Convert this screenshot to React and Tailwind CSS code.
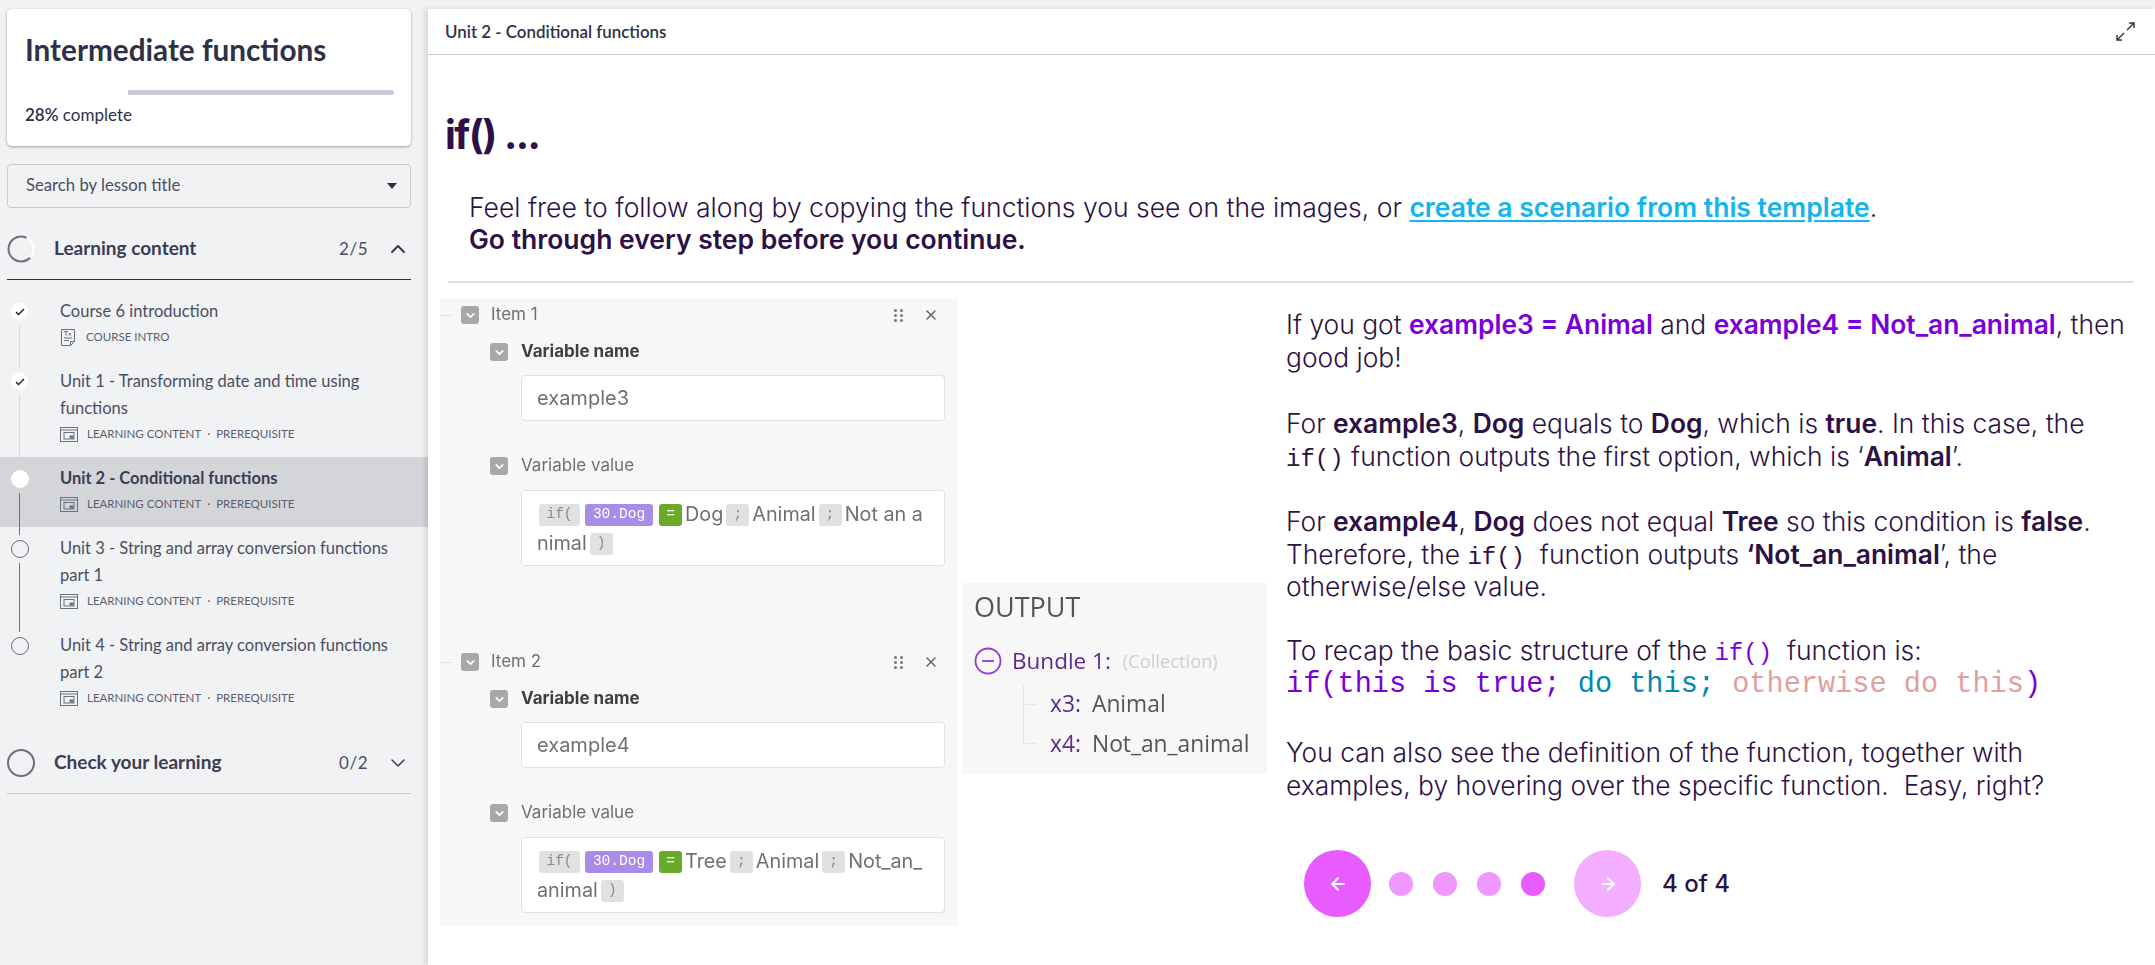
import React from 'react';
import { ArrowLeft, ArrowRight, ChevronDown, ChevronUp, X } from 'lucide-react';

const SANS = "font-['Lato','Noto_Sans',sans-serif]";

const lessons = [
    { title: ['Course 6 introduction'], meta: 'COURSE INTRO', icon: 'doc', state: 'done', line: 'light' },
    { title: ['Unit 1 - Transforming date and time using', 'functions'], meta: 'LEARNING CONTENT', extra: true, state: 'done', line: 'light' },
    { title: ['Unit 2 - Conditional functions'], meta: 'LEARNING CONTENT', extra: true, state: 'active', line: 'dark' },
    { title: ['Unit 3 - String and array conversion functions', 'part 1'], meta: 'LEARNING CONTENT', extra: true, state: 'todo', line: 'dark' },
    { title: ['Unit 4 - String and array conversion functions', 'part 2'], meta: 'LEARNING CONTENT', extra: true, state: 'todo' },
];

function DocIcon() {
    return (
        <svg width="16" height="19" viewBox="0 0 16 19" fill="none" stroke="#6b7080" strokeWidth="1">
            <path d="M1.500 1.500h13v12l-4 4h-9z" />
            <path d="M10.500 17.500v-4h4" />
            <path d="M4 3.500h4M6 3.500v4M8.500 5l2.500 2.500M11 5l-2.500 2.500M4 10h8M4 12.500h5" />
        </svg>
    );
}

function ContentIcon() {
    return (
        <svg width="18" height="15" viewBox="0 0 18 15" fill="none" stroke="#6b7080" strokeWidth="1">
            <rect x="0.500" y="0.500" width="17" height="14" />
            <path d="M0.500 3h17" />
            <rect x="4" y="5.500" width="10" height="6.500" />
            <rect x="10" y="9" width="3" height="2" fill="#6b7080" />
        </svg>
    );
}

function TimelineDot({ state }) {
    if (state === 'done') {
        return (
            <div className="w-[17px] h-[17px] rounded-full bg-white flex items-center justify-center shrink-0">
                <svg width="10" height="8" viewBox="0 0 10 8" fill="none" stroke="#20223a" strokeWidth="1.500">
                    <path d="M1 4l2.500 2.500L9 1" />
                </svg>
            </div>
        );
    }
    if (state === 'active') return <div className="w-[18px] h-[18px] rounded-full bg-white shrink-0" />;
    return <div className="w-[18px] h-[18px] rounded-full border border-[#6b6e7c] shrink-0" />;
}

function LessonRow({ lesson }) {
    const active = lesson.state === 'active';
    return (
        <div className={`flex ${active ? 'bg-[#d4d5d9]' : ''}`}>
            <div className="w-[39px] flex flex-col items-center pt-[13px] shrink-0">
                <TimelineDot state={lesson.state} />
                {lesson.line && (
                    <div className={`relative flex-1 w-px mt-[5px] -mb-[8px] ${lesson.line === 'light' ? 'bg-[#d9dade]' : 'bg-[#6b6e7c]'}`} />
                )}
            </div>
            <div className="ml-[21px] pt-[8px] pb-[11px]">
                {lesson.title.map(t => (
                    <div key={t} className={`text-[16.500px] leading-[27px] ${active ? 'font-bold text-[#3a3d55]' : 'text-[#4b4e62]'}`}>{t}</div>
                ))}
                <div className="flex items-center h-[24px] text-[#5b5e70] text-[11.500px]">
                    {lesson.icon === 'doc' ? <DocIcon /> : <ContentIcon />}
                    <span className={lesson.icon === 'doc' ? 'ml-[10px]' : 'ml-[9px]'}>{lesson.meta}</span>
                    {lesson.extra && <span className="mx-[6px]">·</span>}
                    {lesson.extra && <span>PREREQUISITE</span>}
                </div>
            </div>
        </div>
    );
}

function Sidebar() {
    return (
        <div className={`w-[428px] shrink-0 bg-[#f1f2f4] pt-[9px] pr-[17px] ${SANS} text-[#2e3148]`}>
            <div className="ml-[7px] h-[137px] bg-white rounded-[5px] shadow-[0_1px_3px_rgba(0,0,0,0.35)] px-[18px] pt-[21px]">
                <h1 className="text-[29.700px] leading-[40px] font-bold text-[#2e3148]">Intermediate functions</h1>
                <div className="mt-[20px] h-[5px] bg-[#c8cad8] rounded-[2px] mr-[-1px]">
                    <div className="w-[28%] h-full bg-white" />
                </div>
                <div className="mt-[8px] text-[17px] leading-[24px]"><span className="font-semibold">28%</span> complete</div>
            </div>

            <div className="ml-[7px] mt-[18px] h-[44px] border border-[#c8cad0] rounded-[4px] flex items-center justify-between pl-[18px] pr-[13px] text-[16.700px] text-[#4b4e62]">
                <span>Search by lesson title</span>
                <div className="w-0 h-0 border-x-[5px] border-x-transparent border-t-[6px] border-t-[#2e3148]" />
            </div>

            <div className="ml-[7px] mt-[10px] h-[62px] flex items-center border-b border-[#2e3148]">
                <svg width="28" height="28" viewBox="0 0 28 28" fill="none" strokeWidth="2" className="shrink-0">
                    <circle cx="14" cy="14" r="12.500" stroke="#ffffff" />
                    <path d="M19.500 2.800A12.500 12.500 0 1 0 23 22.700" stroke="#6d6f7e" />
                </svg>
                <span className="ml-[19px] text-[19px] font-bold text-[#3a3d55]">Learning content</span>
                <span className="ml-auto text-[17px] tracking-[0.500px] text-[#4b4e62]">2/5</span>
                <ChevronUp size={24} strokeWidth={1.800} className="ml-[18px] mr-[1px] text-[#2e3148]" />
            </div>

            <div className="mt-[10px] mr-[-17px]">
                {lessons.map(l => <LessonRow key={l.title[0]} lesson={l} />)}
            </div>

            <div className="ml-[7px] mt-[11px] h-[62px] flex items-center border-b border-[#c8cad0]">
                <div className="w-[28px] h-[28px] rounded-full border-2 border-[#6d6f7e] shrink-0" />
                <span className="ml-[19px] text-[19px] font-bold text-[#3a3d55]">Check your learning</span>
                <span className="ml-auto text-[17px] tracking-[0.500px] text-[#4b4e62]">0/2</span>
                <ChevronDown size={24} strokeWidth={1.500} className="ml-[18px] mr-[1px] text-[#3a3d55]" />
            </div>
        </div>
    );
}

function Chevron() {
    return (
        <div className="w-[18px] h-[18px] rounded-[3px] bg-[#a8a8a8] flex items-center justify-center shrink-0">
            <ChevronDown size={13} strokeWidth={3} className="text-white" />
        </div>
    );
}

function Token({ children, className = 'bg-[#e1e1e1] text-[#8a8a8a]', width }) {
    return (
        <span className={`inline-flex items-center justify-center h-[22px] rounded-[3px] font-['Liberation_Mono',monospace] text-[14.500px] ${width} ${className}`}>
            {children}
        </span>
    );
}

function ValueLine({ children }) {
    return <div className="flex items-center h-[29px] text-[19.800px] text-[#6d7074] gap-x-[3px]">{children}</div>;
}

function ItemBlock({ label, name, children }) {
    return (
        <div>
            <div className="h-[32px] flex items-center">
                <div className="w-[10px] ml-px border-t border-dotted border-[#cccccc] shrink-0" />
                <div className="ml-[10px]"><Chevron /></div>
                <span className="ml-[12px] text-[17px] text-[#6d7074]">{label}</span>
                <div className="ml-auto mr-[19px] flex items-center gap-x-[20px]">
                    <div className="grid grid-cols-2 gap-x-[3px] gap-y-[2px]">
                        {[0, 1, 2, 3, 4, 5].map(i => <span key={i} className="w-[3px] h-[3px] rounded-full bg-[#777777]" />)}
                    </div>
                    <X size={16} strokeWidth={2.200} className="text-[#666666]" />
                </div>
            </div>
            <div className="mt-[9px] ml-[50px] h-[24px] flex items-center">
                <Chevron />
                <span className="ml-[13px] text-[17px] font-bold text-[#3f3f3f]">Variable name</span>
            </div>
            <div className="mt-[11px] ml-[81px] mr-[13px] h-[46px] bg-white border border-[#e3e3e3] rounded-[4px] flex items-center pl-[15px] text-[20px] text-[#6d7074]">{name}</div>
            <div className="mt-[33px] ml-[50px] h-[24px] flex items-center">
                <Chevron />
                <span className="ml-[13px] text-[17px] text-[#6d7074]">Variable value</span>
            </div>
            <div className="mt-[12px] ml-[81px] mr-[13px] h-[76px] bg-white border border-[#e3e3e3] rounded-[4px] pl-[15px] pt-[9px]">{children}</div>
        </div>
    );
}

function FirstTokens() {
    return (
        <>
            <Token width="w-[41px] ml-[2px] mr-[2px]">if(</Token>
            <Token width="w-[68px] mr-[3px]" className="bg-[#a98be8] text-white">30.Dog</Token>
            <Token width="w-[23px]" className="bg-[#6aaa2b] text-white">=</Token>
        </>
    );
}

function ScreenshotColumn() {
    return (
        <div className="w-[518px] shrink-0 bg-[#f7f7f7] pb-[13px] font-['Inter',sans-serif] blur-[0.4px]">
            <ItemBlock label="Item 1" name="example3">
                <ValueLine>
                    <FirstTokens />
                    <span>Dog</span><Token width="w-[23px]">;</Token>
                    <span>Animal</span><Token width="w-[23px]">;</Token>
                    <span>Not an a</span>
                </ValueLine>
                <ValueLine><span>nimal</span><Token width="w-[23px]">)</Token></ValueLine>
            </ItemBlock>
            <div className="h-[80px]" />
            <ItemBlock label="Item 2" name="example4">
                <ValueLine>
                    <FirstTokens />
                    <span>Tree</span><Token width="w-[23px]">;</Token>
                    <span>Animal</span><Token width="w-[23px]">;</Token>
                    <span>Not_an_</span>
                </ValueLine>
                <ValueLine><span>animal</span><Token width="w-[23px]">)</Token></ValueLine>
            </ItemBlock>
        </div>
    );
}

function OutputPanel() {
    return (
        <div className="ml-[4px] mt-[284px] w-[305px] h-[191px] shrink-0 bg-[#f7f7f7] pl-[12px] pt-[8px] font-['Open_Sans',sans-serif] blur-[0.4px]">
            <div className="text-[27px] leading-[32px] text-[#555555]">OUTPUT</div>
            <div className="mt-[21px] flex items-center h-[34px]">
                <svg width="28" height="28" viewBox="0 0 28 28" fill="none" stroke="#9138d8" strokeWidth="1.800">
                    <circle cx="14" cy="14" r="12.500" />
                    <path d="M8 14h12" />
                </svg>
                <span className="ml-[10px] text-[22.500px] text-[#5e2a8c]">Bundle 1:</span>
                <span className="ml-[12px] text-[18.300px] text-[#cfcfcf]">(Collection)</span>
            </div>
            <div className="ml-[49px] mt-[6px] flex items-center h-[40px] text-[22.800px]">
                <div className="relative w-[14px] h-full border-l border-[#e6e6ee]">
                    <div className="absolute top-1/2 w-full border-t border-[#e6e6ee]" />
                </div>
                <span className="ml-[13px] text-[#5e2a8c]">x3:</span><span className="ml-[11px] text-[#555555]">Animal</span>
            </div>
            <div className="ml-[49px] flex items-center h-[40px] text-[22.800px]">
                <div className="w-[14px] h-[20px] self-start border-l border-b border-[#e6e6ee]" />
                <span className="ml-[13px] text-[#5e2a8c]">x4:</span><span className="ml-[11px] text-[#555555]">Not_an_animal</span>
            </div>
        </div>
    );
}

function Code({ children, className = '' }) {
    return <span className={`font-['Liberation_Mono',monospace] text-[24px] leading-none ${className}`}>{children}</span>;
}

function Explanation() {
    const B = ({ children }) => <strong className="font-semibold">{children}</strong>;
    const P = ({ children }) => <strong className="font-semibold text-[#7a00d8]">{children}</strong>;
    return (
        <div className="ml-[19px] flex-1 text-[26.400px] leading-[32.500px] font-light text-[#2d1045] whitespace-nowrap">
            <p className="pt-[9px]">If you got <P>example3 = Animal</P> and <P>example4 = Not_an_animal</P>, then<br />good job!</p>
            <p className="mt-[34px]">For <B>example3</B>, <B>Dog</B> equals to <B>Dog</B>, which is <B>true</B>. In this case, the<br /><Code>if()</Code> function outputs the first option, which is ‘<B>Animal</B>’.</p>
            <p className="mt-[33px]">For <B>example4</B>, <B>Dog</B> does not equal <B>Tree</B> so this condition is <B>false</B>.<br />Therefore, the <Code>if()</Code>&nbsp; function outputs <B>‘Not_an_animal</B>’, the<br />otherwise/else value.</p>
            <p className="mt-[31px]">To recap the basic structure of the <Code className="text-[#7a00d8]">if()</Code>&nbsp; function is:</p>
            <p className="font-['Liberation_Mono',monospace] text-[28.600px] leading-[38px]">
                <span className="text-[#7a00d8]">if(this is true; </span><span className="text-[#0088b0]">do this; </span><span className="text-[#e0a0a0]">otherwise do this</span><span className="text-[#7a00d8]">)</span>
            </p>
            <p className="mt-[32px]">You can also see the definition of the function, together with<br />examples, by hovering over the specific function.&nbsp; Easy, right?</p>

            <div className="mt-[49px] ml-[18px] flex items-center">
                <div className="w-[67px] h-[67px] rounded-full bg-[#e85bff] flex items-center justify-center">
                    <ArrowLeft size={20} strokeWidth={2.500} className="text-white" />
                </div>
                <div className="ml-[18px] flex gap-x-[20px]">
                    <span className="w-[24px] h-[24px] rounded-full bg-[#ef96ff]" />
                    <span className="w-[24px] h-[24px] rounded-full bg-[#ef96ff]" />
                    <span className="w-[24px] h-[24px] rounded-full bg-[#ef96ff]" />
                    <span className="w-[24px] h-[24px] rounded-full bg-[#e85bff]" />
                </div>
                <div className="ml-[29px] w-[67px] h-[67px] rounded-full bg-[#f3aeff] flex items-center justify-center">
                    <ArrowRight size={20} strokeWidth={2.500} className="text-white" />
                </div>
                <span className="ml-[21px] text-[24px] leading-[32px] font-medium">4 of 4</span>
            </div>
        </div>
    );
}

function Main() {
    return (
        <div className="flex-1 min-w-0 mt-[9px] bg-white shadow-[-3px_0_5px_rgba(0,0,0,0.12)] font-['Inter',sans-serif] text-[#2d1045]">
            <div className={`h-[46px] border-b border-[#c8c8d0] flex items-center justify-between pl-[17px] pr-[20px] text-[16.900px] font-semibold text-[#2e3148] ${SANS}`}>
                <span>Unit 2 - Conditional functions</span>
                <svg width="19" height="19" viewBox="0 0 19 19" fill="none" stroke="#2e3148" strokeWidth="1.400">
                    <path d="M11 8l7-7M13 1h5v5M8 11l-7 7M1 13v5h5" />
                </svg>
            </div>
            <h2 className="mt-[54px] ml-[17px] text-[40px] leading-[52px] font-bold tracking-[-1.500px] text-[#2d1045]">if() ...</h2>
            <div className="mt-[30px] ml-[41px] text-[26.500px] leading-[32px] font-light">
                Feel free to follow along by copying the functions you see on the images, or <a href="#" className="font-semibold text-[#13b5ea] underline underline-offset-[3px]">create a scenario from this template</a>.<br />
                <strong className="font-semibold">Go through every step before you continue.</strong>
            </div>
            <div className="mt-[26px] ml-[20px] mr-[22px] h-[2px] bg-[#e3dcdf]" />
            <div className="mt-[16px] ml-[12px] flex">
                <ScreenshotColumn />
                <OutputPanel />
                <Explanation />
            </div>
        </div>
    );
}

export default function App() {
    return (
        <div className="flex w-[2155px] h-[965px] overflow-hidden bg-[#f1f2f4]">
            <Sidebar />
            <Main />
        </div>
    );
}
